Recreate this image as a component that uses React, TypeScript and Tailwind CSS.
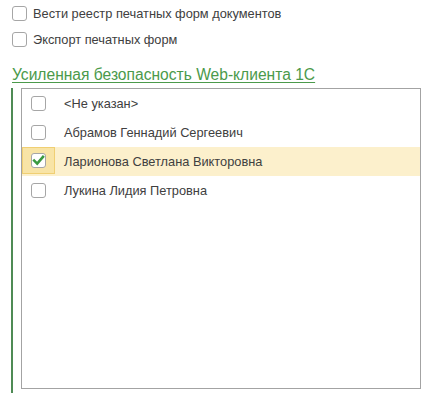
import React from "react";

function Box({ checked = false }: { checked?: boolean }) {
  return (
    <div className="w-[15px] h-[15px] shrink-0 rounded-[3px] border border-[#a6a6a6] bg-white flex items-center justify-center">
      {checked && (
        <svg width="13" height="13" viewBox="0 0 13 13">
          <path d="M2.2 6.6 L5.2 9.6 L11 2.8" fill="none" stroke="#3a9a40" strokeWidth="2.6" strokeLinecap="square" />
        </svg>
      )}
    </div>
  );
}

const rows = [
  { name: "<Не указан>", checked: false },
  { name: "Абрамов Геннадий Сергеевич", checked: false },
  { name: "Ларионова Светлана Викторовна", checked: true },
  { name: "Лукина Лидия Петровна", checked: false },
];

export default function App() {
  return (
    <div
      className="w-[435px] h-[393px] bg-white overflow-hidden text-[12.8px] text-[#404040]"
      style={{ fontFamily: '"Liberation Sans", Arial, sans-serif' }}
    >
      <div className="pl-[12px] pt-[6px] flex flex-col gap-[11px]">
        <div className="flex items-center gap-[6px] h-[15px]">
          <Box />
          <span>Вести реестр печатных форм документов</span>
        </div>
        <div className="flex items-center gap-[6px] h-[15px]">
          <Box />
          <span>Экспорт печатных форм</span>
        </div>
      </div>
      <div className="pl-[12px] mt-[19px] h-[17px] leading-[17px] text-[15.6px] text-[#4b9a4b] underline underline-offset-[2px] decoration-[1px]">
        Усиленная безопасность Web-клиента 1С
      </div>
      <div className="flex mt-[5px] ml-[11px] h-[305px]">
        <div className="w-[2px] h-full bg-[#4f8b55]" />
        <div className="ml-[8px] w-[400px] h-[301px] border border-[#a3a3a3] flex flex-col">
          {rows.map((r) =>
            r.checked ? (
              <div key={r.name} className="h-[29px] flex items-center bg-[#fcf0cc]">
                <div className="w-[33px] h-[27px] -mt-[2px] bg-[#f8e4a6] border border-[#f0cf73] flex items-center justify-center">
                  <Box checked />
                </div>
                <span className="ml-[9px]">{r.name}</span>
              </div>
            ) : (
              <div key={r.name} className="h-[29px] flex items-center">
                <div className="w-[33px] flex items-center justify-center">
                  <Box />
                </div>
                <span className="ml-[9px]">{r.name}</span>
              </div>
            )
          )}
        </div>
      </div>
    </div>
  );
}
